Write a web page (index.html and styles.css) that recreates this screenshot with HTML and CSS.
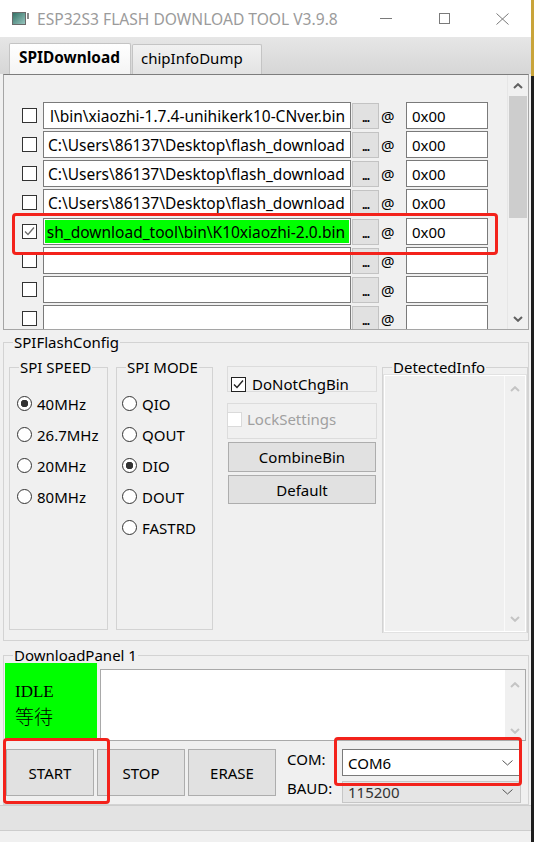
FILE: index.html
```html
<!DOCTYPE html>
<html lang="zh-CN">
<head>
    <meta charset="UTF-8">
    <meta name="viewport" content="width=device-width, initial-scale=1.0">
    <title>ESP32S3 FLASH DOWNLOAD TOOL V3.9.8</title>
    <link rel="stylesheet" href="styles.css">
</head>
<body>
    <div class="window">
        <div class="titlebar">
            <svg class="app-icon" width="18" height="13" viewBox="0 0 18 13">
                <defs>
                    <linearGradient id="ig" x1="0" y1="0" x2="1" y2="1">
                        <stop offset="0" stop-color="#2f6f63"/>
                        <stop offset="1" stop-color="#9cc9c2"/>
                    </linearGradient>
                </defs>
                <rect x="0.5" y="0.5" width="13" height="12" fill="url(#ig)" stroke="#6a6a6a"/>
                <rect x="15" y="1" width="2" height="6" fill="#8a8a8a"/>
            </svg>
            <span class="title">ESP32S3 FLASH DOWNLOAD TOOL V3.9.8</span>
            <div class="win-btn">
                <svg width="12" height="1"><rect width="12" height="1" fill="#7a7a7a"/></svg>
            </div>
            <div class="win-btn">
                <svg width="11" height="11"><rect x="0.5" y="0.5" width="10" height="10" fill="none" stroke="#7a7a7a"/></svg>
            </div>
            <div class="win-btn">
                <svg width="13" height="12" viewBox="0 0 13 12"><path d="M0.5 0.5 L12.5 11.5 M12.5 0.5 L0.5 11.5" stroke="#7a7a7a" fill="none"/></svg>
            </div>
        </div>

        <div class="tabbar">
            <div class="tab active">SPIDownload</div>
            <div class="tab">chipInfoDump</div>
        </div>

        <div class="page">
            <div class="filelist">
                <div class="files">
                    <div class="file-row">
                        <span class="check"></span>
                        <div class="path tail"><span>l\bin\xiaozhi-1.7.4-unihikerk10-CNver.bin</span></div>
                        <div class="browse">...</div>
                        <span class="at">@</span>
                        <div class="addr">0x00</div>
                    </div>
                    <div class="file-row">
                        <span class="check"></span>
                        <div class="path"><span>C:\Users\86137\Desktop\flash_download</span></div>
                        <div class="browse">...</div>
                        <span class="at">@</span>
                        <div class="addr">0x00</div>
                    </div>
                    <div class="file-row">
                        <span class="check"></span>
                        <div class="path"><span>C:\Users\86137\Desktop\flash_download</span></div>
                        <div class="browse">...</div>
                        <span class="at">@</span>
                        <div class="addr">0x00</div>
                    </div>
                    <div class="file-row">
                        <span class="check"></span>
                        <div class="path"><span>C:\Users\86137\Desktop\flash_download</span></div>
                        <div class="browse">...</div>
                        <span class="at">@</span>
                        <div class="addr">0x00</div>
                    </div>
                    <div class="file-row selected">
                        <span class="check checked">
                            <svg width="13" height="13" viewBox="0 0 13 13"><path d="M2 6.5 L5 9.5 L11 2.5" fill="none" stroke="#6b6b6b" stroke-width="1.3"/></svg>
                        </span>
                        <div class="path tail green"><span>sh_download_tool\bin\K10xiaozhi-2.0.bin</span></div>
                        <div class="browse">...</div>
                        <span class="at">@</span>
                        <div class="addr">0x00</div>
                    </div>
                    <div class="file-row">
                        <span class="check"></span>
                        <div class="path"></div>
                        <div class="browse">...</div>
                        <span class="at">@</span>
                        <div class="addr"></div>
                    </div>
                    <div class="file-row">
                        <span class="check"></span>
                        <div class="path"></div>
                        <div class="browse">...</div>
                        <span class="at">@</span>
                        <div class="addr"></div>
                    </div>
                    <div class="file-row">
                        <span class="check"></span>
                        <div class="path"></div>
                        <div class="browse">...</div>
                        <span class="at">@</span>
                        <div class="addr"></div>
                    </div>
                </div>
                <div class="vscroll">
                    <div class="arrow">
                        <svg width="10" height="6" viewBox="0 0 10 6"><path d="M1 5 L5 1.2 L9 5" fill="none" stroke="#606060" stroke-width="2"/></svg>
                    </div>
                    <div class="thumb"></div>
                    <div class="track"></div>
                    <div class="arrow">
                        <svg width="10" height="6" viewBox="0 0 10 6"><path d="M1 1 L5 4.8 L9 1" fill="none" stroke="#606060" stroke-width="2"/></svg>
                    </div>
                </div>
            </div>

            <fieldset class="group config">
                <legend>SPIFlashConfig</legend>
                <div class="config-body">
                    <fieldset class="group speed">
                        <legend>SPI SPEED</legend>
                        <div class="radios">
                            <div class="radio-row"><span class="radio on"></span>40MHz</div>
                            <div class="radio-row"><span class="radio"></span>26.7MHz</div>
                            <div class="radio-row"><span class="radio"></span>20MHz</div>
                            <div class="radio-row"><span class="radio"></span>80MHz</div>
                        </div>
                    </fieldset>
                    <fieldset class="group mode">
                        <legend>SPI MODE</legend>
                        <div class="radios">
                            <div class="radio-row"><span class="radio"></span>QIO</div>
                            <div class="radio-row"><span class="radio"></span>QOUT</div>
                            <div class="radio-row"><span class="radio on"></span>DIO</div>
                            <div class="radio-row"><span class="radio"></span>DOUT</div>
                            <div class="radio-row"><span class="radio"></span>FASTRD</div>
                        </div>
                    </fieldset>
                    <div class="options">
                        <div class="opt-box nochg">
                            <div class="opt-row">
                                <span class="check checked dark">
                                    <svg width="13" height="13" viewBox="0 0 13 13"><path d="M2 6.5 L5 9.5 L11 2.5" fill="none" stroke="#222" stroke-width="1.4"/></svg>
                                </span>
                                DoNotChgBin
                            </div>
                        </div>
                        <div class="opt-box lock">
                            <div class="opt-row disabled"><span class="check off"></span>LockSettings</div>
                        </div>
                        <div class="btn wide">CombineBin</div>
                        <div class="btn wide low">Default</div>
                    </div>
                    <fieldset class="group detected">
                        <legend>DetectedInfo</legend>
                        <div class="info-box">
                            <div class="info-fill"></div>
                            <div class="info-scroll">
                                <div class="arrow top">
                                    <svg width="10" height="6" viewBox="0 0 10 6"><path d="M1 5 L5 1.2 L9 5" fill="none" stroke="#c4c4c4" stroke-width="2"/></svg>
                                </div>
                                <div class="track"></div>
                                <div class="arrow bottom">
                                    <svg width="10" height="6" viewBox="0 0 10 6"><path d="M1 1 L5 4.8 L9 1" fill="none" stroke="#c4c4c4" stroke-width="2"/></svg>
                                </div>
                            </div>
                        </div>
                    </fieldset>
                </div>
            </fieldset>

            <fieldset class="group download">
                <legend>DownloadPanel 1</legend>
                <div class="download-body">
                    <div class="status-row">
                        <div class="idle">
                            <div class="idle-en">IDLE</div>
                            <div class="idle-zh">等待</div>
                        </div>
                        <div class="log">
                            <div class="info-fill"></div>
                            <div class="log-scroll">
                                <div class="arrow top">
                                    <svg width="10" height="6" viewBox="0 0 10 6"><path d="M1 5 L5 1.2 L9 5" fill="none" stroke="#c4c4c4" stroke-width="2"/></svg>
                                </div>
                                <div class="track"></div>
                                <div class="arrow bottom">
                                    <svg width="10" height="6" viewBox="0 0 10 6"><path d="M1 1 L5 4.8 L9 1" fill="none" stroke="#c4c4c4" stroke-width="2"/></svg>
                                </div>
                            </div>
                        </div>
                    </div>
                    <div class="controls-row">
                        <div class="btn action marked">START</div>
                        <div class="btn action">STOP</div>
                        <div class="btn action">ERASE</div>
                        <div class="port-grid">
                            <span class="port-label">COM:</span>
                            <div class="select com marked">
                                <span>COM6</span>
                                <svg width="11" height="6" viewBox="0 0 11 6"><path d="M0.5 0.5 L5.5 5 L10.5 0.5" fill="none" stroke="#555"/></svg>
                            </div>
                            <span class="port-label baud">BAUD:</span>
                            <div class="select baud-select">
                                <span>115200</span>
                                <svg width="11" height="6" viewBox="0 0 11 6"><path d="M0.5 0.5 L5.5 5 L10.5 0.5" fill="none" stroke="#555"/></svg>
                            </div>
                        </div>
                    </div>
                </div>
            </fieldset>
        </div>

        <div class="statusbar"></div>
    </div>
</body>
</html>
```

FILE: styles.css
```css
* {
    box-sizing: border-box;
}

body {
    margin: 0;
    background: linear-gradient(#c9a43a 0 76px, #1d1d1d 76px);
    font-family: "Noto Sans", "Noto Sans CJK SC", sans-serif;
    font-size: 15px;
    color: #000;
}

.window {
    width: 531px;
    height: 842px;
    background-color: #f0f0f0;
    display: flex;
    flex-direction: column;
    overflow: hidden;
}

/* title bar */
.titlebar {
    height: 37px;
    flex: none;
    display: flex;
    align-items: center;
    padding-left: 12px;
    background-color: #fff;
}

.app-icon {
    margin-right: 7px;
}

.title {
    flex: 1;
    color: #9b9b9b;
    font-size: 15.6px;
    white-space: nowrap;
}

.win-btn {
    width: 58px;
    height: 37px;
    display: flex;
    align-items: center;
    justify-content: center;
}

/* tabs */
.tabbar {
    height: 37px;
    flex: none;
    display: flex;
    align-items: flex-end;
    padding-left: 9px;
    background: linear-gradient(#e6e6e6, #d6d6d6);
}

.tab {
    height: 30px;
    width: 130px;
    margin-left: 1px;
    padding: 0 8px 4px;
    display: flex;
    align-items: center;
    border: 1px solid #c4c4c4;
    border-bottom: none;
    border-radius: 2px 2px 0 0;
    background: linear-gradient(#f1f1f1, #e3e3e3);
}

.tab.active {
    width: 122px;
    height: 31px;
    margin-left: 0;
    padding: 0 9px 4px;
    font-weight: bold;
    font-size: 15.4px;
    background: linear-gradient(#ffffff, #f4f4f4);
}

.page {
    padding: 0 2px 0 3px;
}

/* file list */
.filelist {
    height: 256px;
    display: flex;
    border: 1px solid #a5a5a5;
    border-top-color: #7d7d7d;
}

.files {
    flex: 1;
    display: flex;
    flex-direction: column;
    gap: 2px;
    padding: 27px 0 0 18px;
    overflow: hidden;
}

.file-row {
    flex: none;
    height: 27px;
    display: flex;
    align-items: center;
}

.check {
    width: 15px;
    height: 15px;
    flex: none;
    display: flex;
    align-items: center;
    justify-content: center;
    border: 1px solid #333;
    background-color: #fff;
    margin-right: 6px;
}

.path {
    width: 308px;
    height: 27px;
    display: flex;
    align-items: center;
    padding: 0 4px;
    font-size: 15.5px;
    border: 1px solid #7a7a7a;
    background-color: #fff;
    overflow: hidden;
    white-space: nowrap;
}

.path.tail {
    justify-content: flex-end;
    padding-right: 5px;
}

.path.green {
    background-color: #00ff00;
    box-shadow: inset 0 0 0 1px #fff;
}

.browse {
    width: 27px;
    height: 26px;
    margin-left: 1px;
    display: flex;
    align-items: center;
    justify-content: center;
    font-size: 12px;
    font-weight: bold;
    letter-spacing: -1px;
    padding-top: 3px;
    background-color: #e1e1e1;
    border: 1px solid #c3c3c3;
}

.at {
    width: 27px;
    padding-left: 2px;
}

.addr {
    width: 82px;
    height: 27px;
    display: flex;
    align-items: center;
    padding-left: 5px;
    border: 1px solid #7a7a7a;
    background-color: #fff;
}

.file-row.selected {
    position: relative;
}

.file-row.selected::after {
    content: "";
    position: absolute;
    left: -10px;
    top: -5px;
    width: 480px;
    height: 36px;
    border: 3px solid #f3221b;
    border-radius: 4px;
}

.vscroll {
    width: 21px;
    display: flex;
    flex-direction: column;
    border-left: 1px solid #e6e6e6;
}

.arrow {
    height: 21px;
    flex: none;
    display: flex;
    align-items: center;
    justify-content: center;
}

.thumb {
    height: 122px;
    margin: 0 1px;
    background-color: #cdcdcd;
}

.track {
    flex: 1;
}

/* group boxes */
.group {
    margin: 0;
    padding: 0;
    min-width: 0;
    border: 1px solid #d3d3d3;
}

.group > legend {
    margin-left: 9px;
    padding: 0 1px;
    height: 20px;
    line-height: 20px;
}

.config {
    margin-top: 2px;
}

.config-body {
    display: flex;
    align-items: flex-start;
    padding: 5px 0 7px 5px;
}

.speed {
    width: 99px;
    height: 273px;
}

.mode {
    width: 97px;
    height: 273px;
    margin-left: 8px;
}

.radios {
    padding: 11px 0 0 7px;
}

.mode .radios {
    padding-left: 5px;
}

.radio-row {
    height: 31px;
    display: flex;
    align-items: center;
    gap: 5px;
}

.radio {
    width: 15px;
    height: 15px;
    border: 1px solid #333;
    border-radius: 50%;
    background-color: #fff;
}

.radio.on {
    background: radial-gradient(circle, #333 0 3.5px, #fff 4px);
}

.options {
    width: 150px;
    margin: 9px 0 0 14px;
    display: flex;
    flex-direction: column;
}

.opt-box {
    border: 1px solid #dcdcdc;
}

.nochg {
    height: 26px;
    padding: 9px 0 0 3px;
}

.lock {
    height: 36px;
    margin-top: 11px;
    padding-top: 7px;
}

.opt-row {
    height: 16px;
    display: flex;
    align-items: center;
    white-space: nowrap;
}

.opt-row .check {
    margin-right: 6px;
}

.check.dark {
    border-color: #222;
}

.check.off {
    border-color: #dadada;
    margin-left: -1px;
    margin-right: 5px;
}

.opt-row.disabled {
    color: #a0a0a0;
}

.btn {
    display: flex;
    align-items: center;
    justify-content: center;
    background-color: #e1e1e1;
    border: 1px solid #adadad;
}

.btn.wide {
    width: 148px;
    height: 30px;
    margin: 3px 0 0 1px;
}

.btn.wide.low {
    height: 29px;
}

.detected {
    width: 146px;
    margin-left: 5px;
}

.info-box {
    width: 142px;
    height: 257px;
    margin: -2px 0 0 1px;
    display: flex;
    border: 1px solid #fff;
    outline: 1px solid #e2e2e2;
}

.info-fill {
    flex: 1;
}

.info-scroll {
    width: 21px;
    display: flex;
    flex-direction: column;
    border-left: 1px solid #fafafa;
}

.info-scroll .arrow.top {
    height: 26px;
}

.info-scroll .arrow.bottom {
    height: 24px;
}

/* download panel */
.download {
    margin-top: 4px;
}

.download-body {
    padding: 0 0 1px 1px;
}

.status-row {
    display: flex;
    align-items: flex-end;
    margin-top: -2px;
}

.idle {
    width: 92px;
    height: 78px;
    padding: 19px 0 0 10px;
    background-color: #00ff00;
}

.idle-en {
    font-family: "Liberation Serif", serif;
    font-size: 17px;
    line-height: 19px;
}

.idle-zh {
    margin-top: 4px;
    font-family: "Noto Sans CJK SC", sans-serif;
    font-size: 19px;
    font-weight: 300;
    line-height: 21px;
}

.log {
    width: 426px;
    height: 72px;
    margin-left: 3px;
    display: flex;
    background-color: #fff;
    border: 1px solid #a9a9a9;
}

.log-scroll {
    width: 20px;
    display: flex;
    flex-direction: column;
    background-color: #f0f0f0;
}

.log-scroll .arrow.top {
    height: 30px;
}

.log-scroll .arrow.bottom {
    height: 18px;
}

.controls-row {
    height: 54px;
    margin-top: 8px;
    display: flex;
    align-items: flex-start;
}

.btn.action {
    width: 88px;
    height: 47px;
    margin-left: 3px;
}

.btn.action:first-child {
    margin-left: 1px;
}

.btn.marked,
.select.marked {
    position: relative;
}

.btn.marked::after {
    content: "";
    position: absolute;
    left: -4px;
    top: -12px;
    width: 101px;
    height: 60px;
    border: 3px solid #f3221b;
    border-radius: 4px;
}

.select.marked::after {
    content: "";
    position: absolute;
    left: -9px;
    top: -13px;
    width: 182px;
    height: 43px;
    border: 3px solid #f3221b;
    border-radius: 4px;
}

.port-grid {
    margin-left: 11px;
    display: grid;
    grid-template-columns: 55px 179px;
    grid-template-rows: 27px 22px;
    row-gap: 5px;
}

.port-label {
    line-height: 20px;
}

.port-label.baud {
    margin-top: -3px;
}

.select {
    display: flex;
    align-items: center;
    justify-content: space-between;
    padding: 0 7px 0 5px;
    border: 1px solid #7a7a7a;
    background-color: #fff;
}

.baud-select {
    color: #333;
    background-color: #e5e5e5;
    border-color: #c6c6c6;
}

.statusbar {
    height: 26px;
    flex: none;
    background-color: #e3e3e3;
    border-top: 1px solid #cdcdcd;
    border-bottom: 1px solid #cdcdcd;
}
```
